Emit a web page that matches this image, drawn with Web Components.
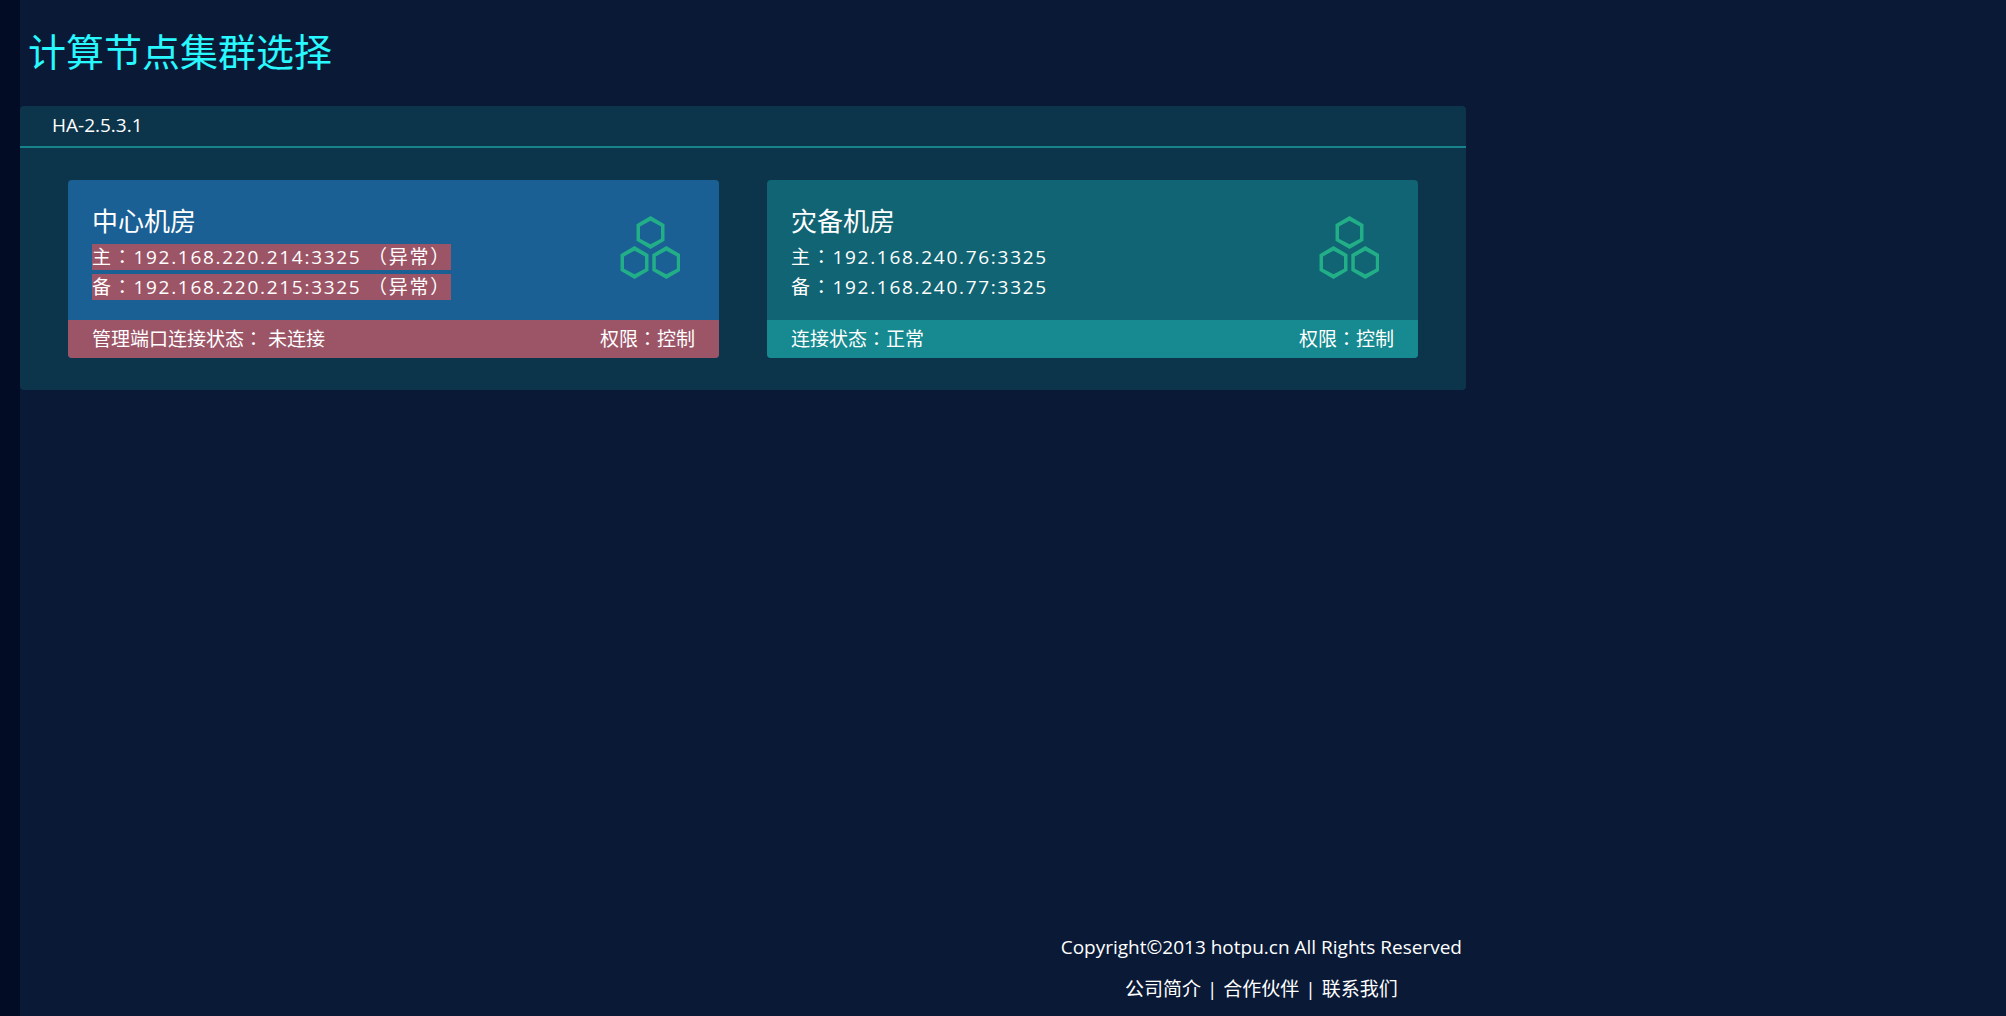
<!DOCTYPE html>
<html lang="zh-CN">
<head>
<meta charset="utf-8">
<meta name="viewport" content="width=device-width, initial-scale=1">
<title>计算节点集群选择</title>
<style>
html{background:#091936}
body{margin:0;color:#fff;font:19px/26px "Open Sans","Noto Sans CJK SC",sans-serif}
/* full-width colon centred in its box, without growing the line */
.colon{font-family:"Noto Sans CJK TC",sans-serif;line-height:0}
</style>
</head>
<body>
<cluster-page>
  <h1 slot="title">计算节点集群选择</h1>
  <cluster-panel>
    <span slot="name">HA-2.5.3.1</span>
    <room-card state="error">
      <span slot="title">中心机房</span>
      <span slot="node">主<span class="colon" lang="zh-TW">：</span>192.168.220.214:3325 （异常）</span>
      <span slot="node">备<span class="colon" lang="zh-TW">：</span>192.168.220.215:3325 （异常）</span>
      <span slot="status">管理端口连接状态<span class="colon" lang="zh-TW">：</span> 未连接</span>
      <span slot="role">权限<span class="colon" lang="zh-TW">：</span>控制</span>
    </room-card>
    <room-card>
      <span slot="title">灾备机房</span>
      <span slot="node">主<span class="colon" lang="zh-TW">：</span>192.168.240.76:3325</span>
      <span slot="node">备<span class="colon" lang="zh-TW">：</span>192.168.240.77:3325</span>
      <span slot="status">连接状态<span class="colon" lang="zh-TW">：</span>正常</span>
      <span slot="role">权限<span class="colon" lang="zh-TW">：</span>控制</span>
    </room-card>
  </cluster-panel>
  <site-footer slot="footer"></site-footer>
</cluster-page>
<script>
function define(name, html) {
  const t = document.createElement('template');
  t.innerHTML = html;
  customElements.define(name, class extends HTMLElement {
    constructor() {
      super();
      this.attachShadow({mode: 'open'}).append(t.content.cloneNode(true));
    }
  });
}

define('cluster-page', `
<style>
:host{display:flex;min-height:100vh;box-sizing:border-box;border-left:20px solid #020d25}
.main{display:flex;flex-direction:column;flex:1;min-width:0;max-width:1446px}
::slotted(h1){margin:0;padding:22px 8px 26px;font-size:38px;line-height:58px;font-weight:400;color:#28f8ff}
footer{margin-top:auto;display:flex;justify-content:flex-end;padding:24px 4px 14px}
</style>
<div class="main">
  <slot name="title"></slot>
  <main><slot></slot></main>
  <footer><slot name="footer"></slot></footer>
</div>`);

define('cluster-panel', `
<style>
:host{display:block;background:#0c354c;border-radius:4px;overflow:hidden}
header{padding:6px 32px 8px;border-bottom:2px solid #158389}
.cards{display:grid;grid-template-columns:repeat(auto-fit,minmax(420px,1fr));gap:48px;padding:32px 48px}
</style>
<header><slot name="name"></slot></header>
<div class="cards"><slot></slot></div>`);

define('hex-icon', `
<style>:host{display:block;width:60px}svg{display:block;width:100%;fill:#22ae87}</style>
<svg viewBox="0 0 60 64" aria-hidden="true">
  <defs><path id="h" fill-rule="evenodd" d="M14 0L28 8.3V24.7L14 33L0 24.7V8.3ZM14 4.8L3.5 10.4V22.8L14 28.3L24.5 22.8V10.4Z"/></defs>
  <use href="#h" x="16.5"/><use href="#h" x="0.5" y="30"/><use href="#h" x="32.3" y="30"/>
</svg>`);

define('room-card', `
<style>
:host{display:flex;flex-direction:column;min-width:0;border-radius:4px;overflow:hidden;background:#106473;--foot:#168a90}
:host([state=error]){background:#1a6095;--foot:#9c5567;--mark:#9c5567}
.body{display:flex;justify-content:space-between;gap:16px;padding:24px 39px 20px 24px}
h2{margin:0 0 6px;font-size:26px;line-height:34px;font-weight:400}
.nodes{display:flex;flex-direction:column;align-items:flex-start;gap:4px}
::slotted([slot=node]){background:var(--mark,transparent);letter-spacing:.09em}
hex-icon{margin-top:12px}
.foot{display:flex;justify-content:space-between;gap:16px;padding:6px 24px;background:var(--foot)}
</style>
<div class="body">
  <div><h2><slot name="title"></slot></h2><div class="nodes"><slot name="node"></slot></div></div>
  <hex-icon></hex-icon>
</div>
<div class="foot"><slot name="status"></slot><slot name="role"></slot></div>`);

define('site-footer', `
<style>
:host{display:block;text-align:center}
p{margin:0 0 16px}
nav{display:flex;justify-content:center;gap:6px}
a{color:inherit;text-decoration:none}
</style>
<p>Copyright©2013 hotpu.cn All Rights Reserved</p>
<nav><a href="#about">公司简介</a><span>|</span><a href="#partners">合作伙伴</a><span>|</span><a href="#contact">联系我们</a></nav>`);
</script>
</body>
</html>
